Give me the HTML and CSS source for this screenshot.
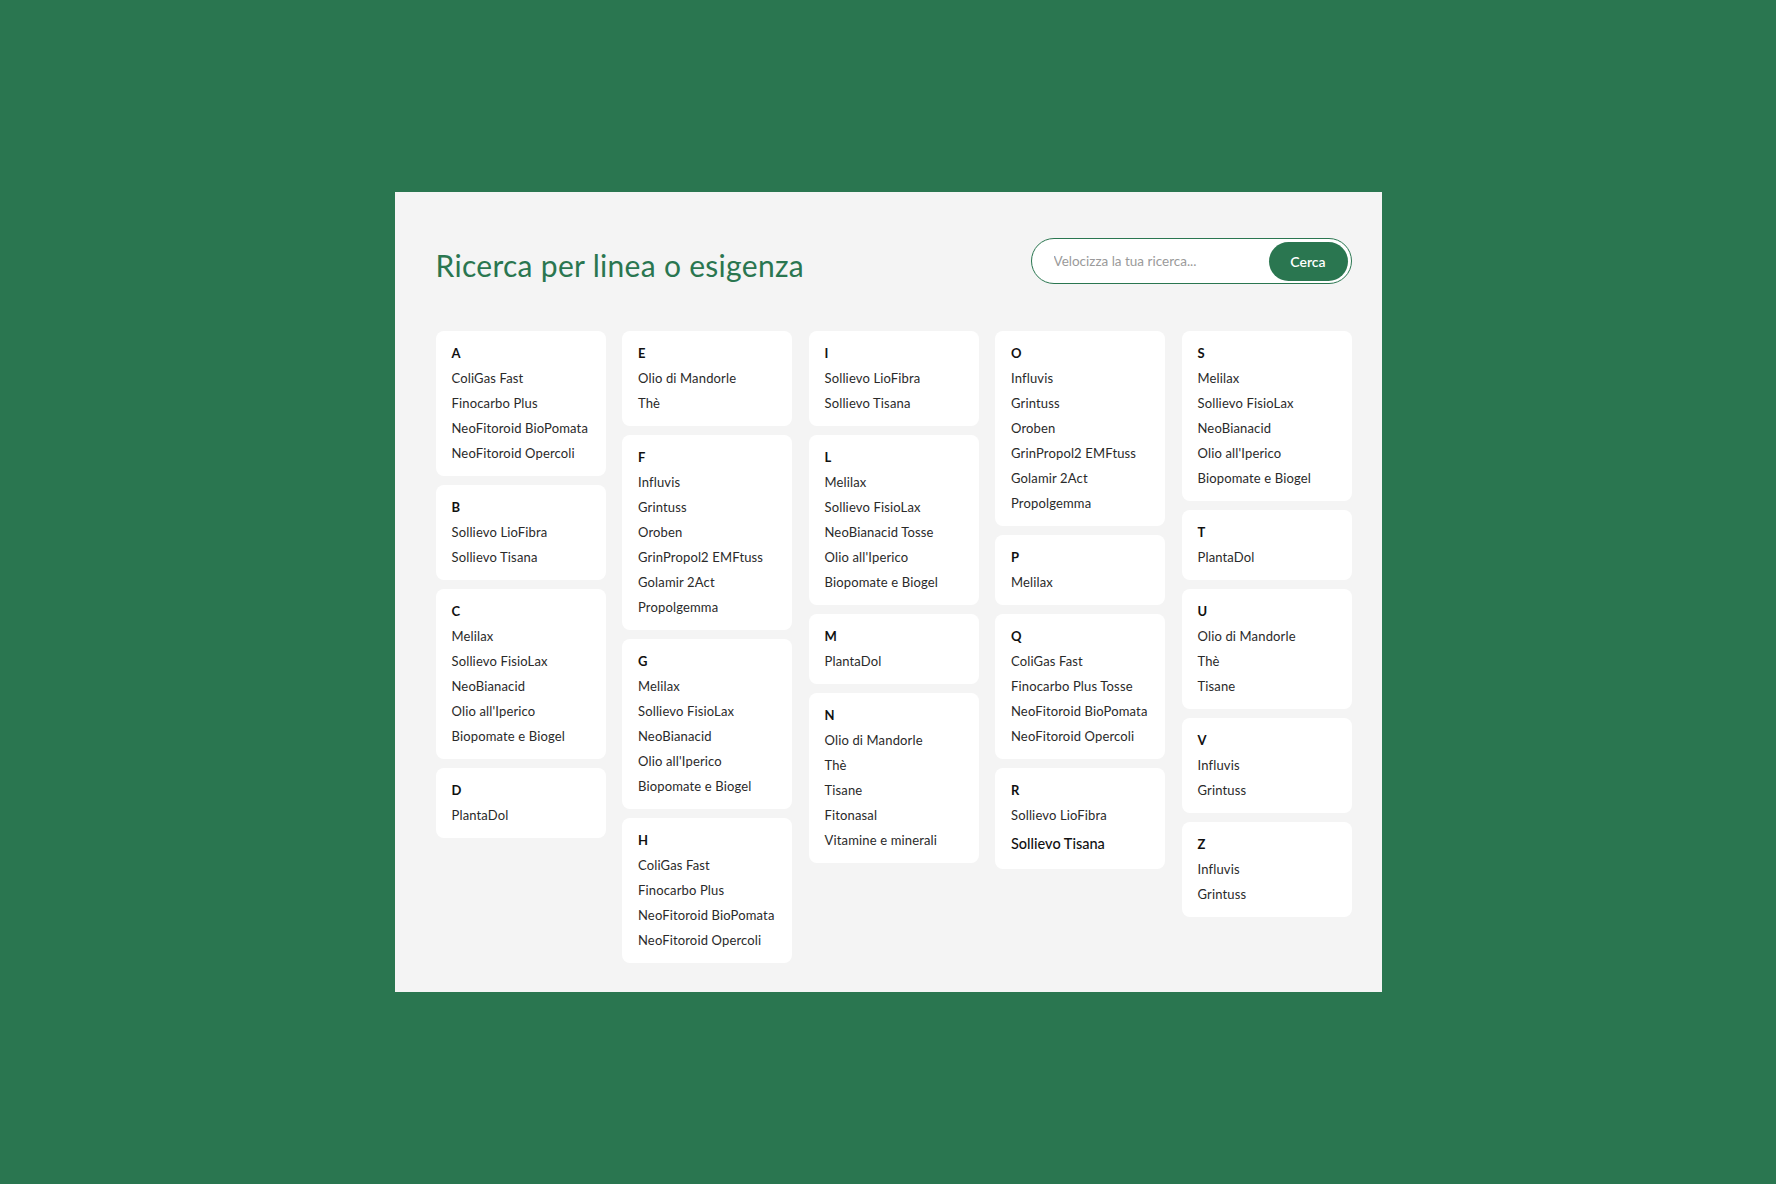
FILE: index.html
```html
<!DOCTYPE html>
<html lang="it">
<head>
<meta charset="utf-8">
<title>Ricerca per linea o esigenza</title>
<link rel="stylesheet" href="styles.css">
</head>
<body>
<main class="panel">
  <header class="head">
    <h1 class="title">Ricerca per linea o esigenza</h1>
    <form class="search">
      <input class="search-input" type="text" placeholder="Velocizza la tua ricerca...">
      <button class="search-btn" type="button">Cerca</button>
    </form>
  </header>
  <section class="grid">
    <div class="col">
      <div class="card"><h2 class="letter">A</h2><ul class="list"><li>ColiGas Fast</li><li>Finocarbo Plus</li><li>NeoFitoroid BioPomata</li><li>NeoFitoroid Opercoli</li></ul></div>
      <div class="card"><h2 class="letter">B</h2><ul class="list"><li>Sollievo LioFibra</li><li>Sollievo Tisana</li></ul></div>
      <div class="card"><h2 class="letter">C</h2><ul class="list"><li>Melilax</li><li>Sollievo FisioLax</li><li>NeoBianacid</li><li>Olio all'Iperico</li><li>Biopomate e Biogel</li></ul></div>
      <div class="card"><h2 class="letter">D</h2><ul class="list"><li>PlantaDol</li></ul></div>
    </div>
    <div class="col">
      <div class="card"><h2 class="letter">E</h2><ul class="list"><li>Olio di Mandorle</li><li>Thè</li></ul></div>
      <div class="card"><h2 class="letter">F</h2><ul class="list"><li>Influvis</li><li>Grintuss</li><li>Oroben</li><li>GrinPropol2 EMFtuss</li><li>Golamir 2Act</li><li>Propolgemma</li></ul></div>
      <div class="card"><h2 class="letter">G</h2><ul class="list"><li>Melilax</li><li>Sollievo FisioLax</li><li>NeoBianacid</li><li>Olio all'Iperico</li><li>Biopomate e Biogel</li></ul></div>
      <div class="card"><h2 class="letter">H</h2><ul class="list"><li>ColiGas Fast</li><li>Finocarbo Plus</li><li>NeoFitoroid BioPomata</li><li>NeoFitoroid Opercoli</li></ul></div>
    </div>
    <div class="col">
      <div class="card"><h2 class="letter">I</h2><ul class="list"><li>Sollievo LioFibra</li><li>Sollievo Tisana</li></ul></div>
      <div class="card"><h2 class="letter">L</h2><ul class="list"><li>Melilax</li><li>Sollievo FisioLax</li><li>NeoBianacid Tosse</li><li>Olio all'Iperico</li><li>Biopomate e Biogel</li></ul></div>
      <div class="card"><h2 class="letter">M</h2><ul class="list"><li>PlantaDol</li></ul></div>
      <div class="card"><h2 class="letter">N</h2><ul class="list"><li>Olio di Mandorle</li><li>Thè</li><li>Tisane</li><li>Fitonasal</li><li>Vitamine e minerali</li></ul></div>
    </div>
    <div class="col">
      <div class="card"><h2 class="letter">O</h2><ul class="list"><li>Influvis</li><li>Grintuss</li><li>Oroben</li><li>GrinPropol2 EMFtuss</li><li>Golamir 2Act</li><li>Propolgemma</li></ul></div>
      <div class="card"><h2 class="letter">P</h2><ul class="list"><li>Melilax</li></ul></div>
      <div class="card"><h2 class="letter">Q</h2><ul class="list"><li>ColiGas Fast</li><li>Finocarbo Plus Tosse</li><li>NeoFitoroid BioPomata</li><li>NeoFitoroid Opercoli</li></ul></div>
      <div class="card"><h2 class="letter">R</h2><ul class="list"><li>Sollievo LioFibra</li><li class="big">Sollievo Tisana</li></ul></div>
    </div>
    <div class="col">
      <div class="card"><h2 class="letter">S</h2><ul class="list"><li>Melilax</li><li>Sollievo FisioLax</li><li>NeoBianacid</li><li>Olio all'Iperico</li><li>Biopomate e Biogel</li></ul></div>
      <div class="card"><h2 class="letter">T</h2><ul class="list"><li>PlantaDol</li></ul></div>
      <div class="card"><h2 class="letter">U</h2><ul class="list"><li>Olio di Mandorle</li><li>Thè</li><li>Tisane</li></ul></div>
      <div class="card"><h2 class="letter">V</h2><ul class="list"><li>Influvis</li><li>Grintuss</li></ul></div>
      <div class="card"><h2 class="letter">Z</h2><ul class="list"><li>Influvis</li><li>Grintuss</li></ul></div>
    </div>
  </section>
</main>
</body>
</html>
```
FILE: styles.css
```css
* { box-sizing: border-box; }
html, body { margin: 0; padding: 0; }
body {
  background: #2a7650;
  min-height: 100vh;
  display: flex;
  align-items: center;
  justify-content: center;
  font-family: "Lato", "Noto Sans", sans-serif;
  color: #222;
}
.panel {
  width: 987px;
  height: 800px;
  background: #f4f4f4;
  padding: 46px 30px 28px 41px;
}
.head {
  display: flex;
  justify-content: space-between;
  align-items: flex-start;
  height: 52px;
  margin-bottom: 41px;
}
.title {
  margin: 4px 0 0 0;
  font-size: 30px;
  line-height: 46px;
  font-weight: 400;
  color: #2a7650;
  letter-spacing: 0.3px;
}
.search {
  width: 321px;
  height: 46px;
  border: 1.5px solid #2a7650;
  border-radius: 23px;
  background: #fff;
  display: flex;
  align-items: center;
  padding: 0 3px 0 20px;
  margin: 0;
}
.search-input {
  flex: 1;
  border: 0;
  outline: none;
  background: transparent;
  font-family: inherit;
  font-size: 13.5px;
  color: #333;
  min-width: 0;
}
.search-input::placeholder { color: #9a9a9a; }
.search-btn {
  width: 79px;
  height: 39px;
  border: 0;
  border-radius: 20px;
  background: #2a7650;
  color: #fff;
  font-family: inherit;
  font-size: 14px;
  font-weight: 600;
  cursor: pointer;
}
.grid {
  display: flex;
  gap: 16.5px;
  align-items: flex-start;
}
.col {
  width: 170px;
  display: flex;
  flex-direction: column;
  gap: 9px;
}
.card {
  background: #fff;
  border-radius: 8px;
  padding: 10px 16px 10px 16px;
}
.letter {
  margin: 0;
  font-size: 13px;
  line-height: 25px;
  font-weight: 700;
  color: #111;
}
.list {
  list-style: none;
  margin: 0;
  padding: 0;
}
.list li {
  font-size: 13px;
  line-height: 25px;
  color: #2a2a2a;
  letter-spacing: 0.15px;
  white-space: nowrap;
}
.list li.big {
  font-size: 14.5px;
  line-height: 31px;
  color: #111;
  font-weight: 500;
  letter-spacing: 0;
}
```
